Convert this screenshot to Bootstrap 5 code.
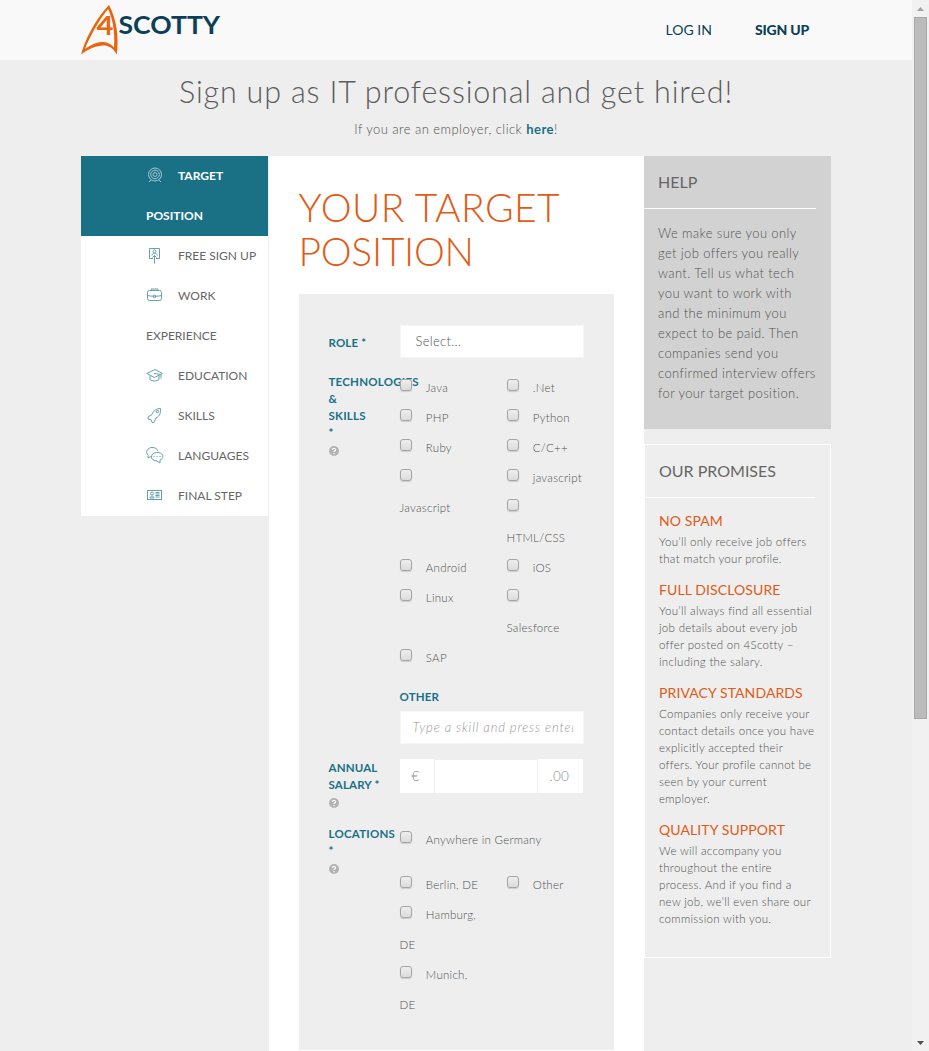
<!DOCTYPE html>
<html lang="en">
<head>
<meta charset="utf-8">
<meta name="viewport" content="width=device-width, initial-scale=1">
<title>4Scotty – Sign up</title>
<link href="https://cdn.jsdelivr.net/npm/bootstrap@5.3.0/dist/css/bootstrap.min.css" rel="stylesheet">
<style>
:root{--teal:#1a7186;--navy:#0c4056;--orange:#e15b16;--ink:#666;--thin-ink:#525252;--page:#eee}
html,body{height:100%;overflow:hidden}
body{background:var(--page);color:var(--thin-ink);font:300 13px/20px Lato,"Liberation Sans",sans-serif}
.viewport{height:1051px;overflow:hidden}
.wrap{width:750px;margin:0 auto}
.site-head{height:60px;background:#f9f9f9}
.site-head a{color:var(--navy);text-decoration:none;font-size:14px;line-height:20px;font-weight:400}
.login{margin-right:43px}
.site-head a.signup{font-weight:900;margin-right:22px;letter-spacing:-.2px}
.headline{font-size:30.5px;line-height:36px;font-weight:300;letter-spacing:.82px;margin:13px 0 0;color:#5c5c5c}
.subline{margin:10px 0 17px;line-height:20px;letter-spacing:.45px}
.subline a{color:var(--teal);font-weight:700;text-decoration:none}
.cols{height:895px}
.side{width:187.5px}
.middle{width:375px;background:#fff;padding:30px 30px 0}
.steps a{display:block;background:#fff;color:var(--ink);font-weight:400;font-size:12px;line-height:40px;padding-left:65px;text-decoration:none;white-space:nowrap;width:187px}
.steps a.current{background:var(--teal);color:#fff;font-weight:700}
.steps svg{width:18px;height:18px;margin-right:14px;vertical-align:middle;position:relative;top:-2px;fill:none;stroke:#65a0ae;stroke-width:1}
.steps .current svg{stroke:#a5cad2}
.title{font-size:39px;line-height:44px;font-weight:300;color:var(--orange);margin:-1px 0 21px;white-space:nowrap;letter-spacing:-.3px}
.title span{letter-spacing:.4px}
.panel{background:var(--page);padding:31px 30px 0;height:756px}
.field-name{width:71px;flex:none;color:var(--teal);font-weight:700;font-size:11.5px;line-height:17px;white-space:nowrap;letter-spacing:.15px}
.field-name.wide-label{letter-spacing:.22px}
.ctl{width:184px;flex:none}
.box{background:#fff;height:33px;border:1px solid #f6f6f6;line-height:30px;font-size:13px;overflow:hidden;white-space:nowrap;letter-spacing:.3px}
.help-dot{width:10px;height:10px;display:block;margin-top:5px}
.opts{width:107px;flex:none;position:relative}
.opt{line-height:30px;font-size:11.5px;height:30px;white-space:nowrap;display:block;letter-spacing:.27px}
.opt.tall{height:60px}
.opt input{appearance:none;width:12px;height:12px;border:1px solid #a5a5a5;border-radius:3px;background:linear-gradient(#eee,#dcdcdc);box-shadow:0 1px 1px #ccc;margin:0 14.3px 0 0;vertical-align:middle;position:relative;top:-4px}
.type-in{font-style:italic;color:#999;padding:0 10px 0 12px;letter-spacing:.83px}
.type-in span{display:block;overflow:hidden}
.money{width:183px;height:34px;color:#8c8c8c;line-height:34px;font-size:13.500px}
.money div{background:#fff}
.money .amount{flex:1;height:33px;margin:1px 1px 0}
.help-card{background:#d2d2d2;height:273px;width:187px}
.card-heading{font-weight:400;font-size:16px;line-height:20px;margin:0;padding:16px 14.5px;border-bottom:1px solid #fff;color:var(--ink)}
.help-card .card-heading{width:172px}
.help-card p{margin:14px 0 0 14.5px;letter-spacing:.38px;white-space:nowrap}
.promises{border:1px solid #fff;height:514px;width:187px;margin-top:15px}
.promises .card-heading{width:170px}
.promises h3{font-weight:400;color:var(--orange);font-size:14px;line-height:20px;margin:13px 0 2px 14.5px;letter-spacing:.1px}
.promises h3~h3{margin-top:13px}
.promises p{font-size:11.5px;line-height:17px;margin:0 0 0 14.500px;white-space:nowrap;letter-spacing:.3px}
.bar{width:17px;flex:none;background:#f1f1f1}
.thumb{width:13px;height:702px;background:#bcbcbc;border:1px solid #a8a8a8}
.arrow-cell{height:17px;padding-top:7px;line-height:0}
</style>
</head>
<body>
<svg class="d-none"><symbol id="q" viewBox="0 0 10 10"><circle cx="5" cy="5" r="5" fill="#b3b3b3"/><path d="M3.400 3.900c.2-2 3.400-1.800 3.200 0C6.500 4.900 5 4.800 5 6M5 7v1.200" fill="none" stroke="#fff" stroke-width="1.200"/></symbol></svg>
<div class="viewport d-flex">
<div class="flex-grow-1">
<header class="site-head">
 <div class="wrap d-flex align-items-center h-100">
  <svg width="142" height="60" viewBox="0 0 142 60" class="me-auto">
   <path d="M28 5C18 15 5 36 .2 54.500 8 48 16 46 22 45.500 28 45.500 32 48 35.800 54.500 38 38 36 20 28 5ZM27 9C18 20 8 38 4 49 12 43 20 41.500 24 42.200 28 43 31 45 33 47.500 34.300 32 31.500 18 27 9Z" fill="#e8650f" fill-rule="evenodd"/>
   <text x="15.500" y="35" font-family="Lato" font-weight="700" font-size="26" fill="#e8650f" textLength="17" lengthAdjust="spacingAndGlyphs">4</text>
   <text x="37.500" y="34" font-family="Lato" font-weight="700" font-size="25" fill="#0c4056" textLength="101.500" lengthAdjust="spacingAndGlyphs">SCOTTY</text>
  </svg>
  <a class="login" href="#">LOG IN</a><a class="signup" href="#">SIGN UP</a>
 </div>
</header>
<main class="wrap">
 <h1 class="headline text-center text-nowrap">Sign up as IT professional and get hired!</h1>
 <p class="subline text-center">If you are an employer, click <a href="#">here</a>!</p>
 <div class="cols d-flex">
  <nav class="side steps">
   <a class="current" href="#"><svg viewBox="0 0 18 18"><circle cx="9" cy="8.500" r="6.500"/><circle cx="9" cy="8.500" r="4.300"/><circle cx="9" cy="8.500" r="2"/><path d="M5 14l-2 2M13 14l2 2"/></svg>TARGET<br>POSITION</a>
   <a href="#"><svg viewBox="0 0 18 18"><path d="M7 12.500H3.500V2.500h10v10H10M8.500 9.500v8M6.500 11.500l2-2 2 2"/><circle cx="8.500" cy="5.500" r="1.500"/><path d="M6 9.500c0-3 5-3 5 0"/></svg>FREE SIGN UP</a>
   <a href="#"><svg viewBox="0 0 18 18"><rect x="1.500" y="4.500" width="14" height="10" rx="2"/><path d="M5 4.500V3h7v1.500M1.500 9.500c3 1 11 1 14 0"/><circle cx="8.500" cy="10.500" r="1.300"/></svg>WORK<br>EXPERIENCE</a>
   <a href="#"><svg viewBox="0 0 18 18"><path d="M.8 7.500L9 3.500l7.500 4-8 4ZM4 9.500v4c2 2 7 2 9 0v-4M8 7.500l7 1v4"/></svg>EDUCATION</a>
   <a href="#"><svg viewBox="0 0 18 18"><path d="M14.500 2.500c-4 0-7 2-8.500 6L2 11v2l3 .5 1 3h2l2-4.500c4-2 5-5.500 4.500-9.500Z"/><circle cx="11.500" cy="5.500" r="1.200"/></svg>SKILLS</a>
   <a href="#"><svg viewBox="0 0 18 18"><path d="M5 10.500l-3 1.500.3-2.500C-1.500 6 2 1.500 6 1.500c3 0 5 1 6 3.500"/><path d="M14 14v3l-3-2c-7 0-7.500-8-.5-8.500 7-.5 8.500 5.500 3.500 7.500Z"/><path d="M7.500 10.500h1M10.500 10.500h1M13.500 10.500h1"/></svg>LANGUAGES</a>
   <a href="#"><svg viewBox="0 0 18 18"><rect x="1.500" y="4.500" width="14" height="9"/><path d="M4 12c0-2.500 4-2.500 4 0ZM9.500 6.500h4M9.500 8h4M9.500 9.500h4M9.500 11h4"/><circle cx="6" cy="7.500" r="1.500"/></svg>FINAL STEP</a>
  </nav>
  <section class="middle">
   <h2 class="title"><span>YOUR TARGET</span><br>POSITION</h2>
   <form class="panel">
    <div class="d-flex"><div class="field-name" style="padding-top:9px">ROLE *</div><div class="ctl box" style="padding-left:15px">Select...</div></div>
    <div class="d-flex" style="margin-top:15px">
     <div class="field-name wide-label">TECHNOLOGIES<br>&amp;<br>SKILLS<br>*<svg class="help-dot"><use href="#q"/></svg></div>
     <div class="ctl d-flex">
      <div class="opts">
       <label class="opt"><input type="checkbox">Java</label><label class="opt"><input type="checkbox">PHP</label><label class="opt"><input type="checkbox">Ruby</label><label class="opt tall"><input type="checkbox"><br>Javascript</label><label class="opt" style="margin-top:30px"><input type="checkbox">Android</label><label class="opt tall"><input type="checkbox">Linux</label><label class="opt"><input type="checkbox">SAP</label>
      </div>
      <div class="opts">
       <label class="opt"><input type="checkbox">.Net</label><label class="opt"><input type="checkbox">Python</label><label class="opt"><input type="checkbox">C/C++</label><label class="opt"><input type="checkbox">javascript</label><label class="opt tall"><input type="checkbox"><br>HTML/CSS</label><label class="opt"><input type="checkbox">iOS</label><label class="opt tall"><input type="checkbox"><br>Salesforce</label>
      </div>
     </div>
    </div>
    <div class="d-flex" style="margin-top:15px"><div class="field-name"></div>
     <div class="ctl"><div class="field-name" style="height:23px">OTHER</div><div class="box type-in"><span>Type a skill and press enter</span></div></div></div>
    <div class="d-flex" style="margin-top:15px"><div class="field-name">ANNUAL<br>SALARY *<svg class="help-dot"><use href="#q"/></svg></div>
     <div class="money d-flex"><div style="width:34px;padding-left:12px">€</div><div class="amount"></div><div style="width:45px;padding-left:12px;letter-spacing:.3px">.00</div></div></div>
    <div class="d-flex" style="margin-top:17px"><div class="field-name wide-label">LOCATIONS<br>*<svg class="help-dot"><use href="#q"/></svg></div>
     <div class="ctl"><label class="opt" style="margin-bottom:15px"><input type="checkbox">Anywhere in Germany</label>
      <div class="d-flex"><div class="opts"><label class="opt"><input type="checkbox">Berlin, DE</label><label class="opt tall"><input type="checkbox">Hamburg,<br>DE</label><label class="opt tall"><input type="checkbox">Munich,<br>DE</label></div>
      <div class="opts"><label class="opt"><input type="checkbox">Other</label></div></div></div></div>
   </form>
  </section>
  <aside class="side">
   <section class="help-card"><h2 class="card-heading">HELP</h2>
    <p>We make sure you only<br>get job offers you really<br>want. Tell us what tech<br>you want to work with<br>and the minimum you<br>expect to be paid. Then<br>companies send you<br>confirmed interview offers<br>for your target position.</p></section>
   <section class="promises"><h2 class="card-heading">OUR PROMISES</h2>
    <h3>NO SPAM</h3><p>You’ll only receive job offers<br>that match your profile.</p>
    <h3>FULL DISCLOSURE</h3><p>You’ll always find all essential<br>job details about every job<br>offer posted on 4Scotty –<br>including the salary.</p>
    <h3>PRIVACY STANDARDS</h3><p>Companies only receive your<br>contact details once you have<br>explicitly accepted their<br>offers. Your profile cannot be<br>seen by your current<br>employer.</p>
    <h3>QUALITY SUPPORT</h3><p>We will accompany you<br>throughout the entire<br>process. And if you find a<br>new job, we’ll even share our<br>commission with you.</p></section>
  </aside>
 </div>
</main>
</div>
<div class="bar d-flex flex-column align-items-center">
 <div class="arrow-cell"><svg width="7" height="4"><path d="M0 4L3.500 0 7 4Z" fill="#a3a3a3"/></svg></div>
 <div class="thumb"></div>
 <div class="arrow-cell mt-auto"><svg width="7" height="4"><path d="M0 0L3.500 4 7 0Z" fill="#505050"/></svg></div>
</div>
</div>
<script src="https://cdn.jsdelivr.net/npm/bootstrap@5.3.0/dist/js/bootstrap.bundle.min.js"></script>
</body>
</html>
